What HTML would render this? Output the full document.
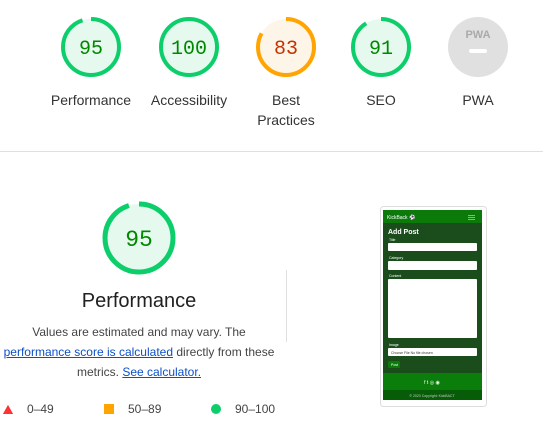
<!DOCTYPE html>
<html><head><meta charset="utf-8"><style>
body{margin:0;width:543px;height:441px;background:#fff;font-family:"Liberation Sans",Arial,sans-serif;position:relative;overflow:hidden;color:#212121}
.a{position:absolute}
.lbl{position:absolute;width:100px;text-align:center;font-size:14px;line-height:20px;color:#333}
.num{font-family:"Liberation Mono",monospace}
a{color:#0c50c7}
</style></head><body>
<svg class="a" style="left:0;top:0" width="543" height="441">
<g stroke-width="4" fill-opacity="1">
<circle cx="91" cy="47" r="28" fill="#e5f9ee" stroke="#0cce6b" stroke-dasharray="167 200" transform="rotate(-90 91 47)"/>
<circle cx="189" cy="47" r="28" fill="#e5f9ee" stroke="#0cce6b"/>
<circle cx="286" cy="47" r="28" fill="#fef5e9" stroke="#ffa400" stroke-dasharray="146 200" transform="rotate(-90 286 47)"/>
<circle cx="381" cy="47" r="28" fill="#e5f9ee" stroke="#0cce6b" stroke-dasharray="160 200" transform="rotate(-90 381 47)"/>
<circle cx="478" cy="47" r="30" fill="#e0e0e0" stroke="none"/>
<circle cx="139" cy="238" r="34" fill="#e5f9ee" stroke="#0cce6b" stroke-width="5" stroke-dasharray="203 300" transform="rotate(-90 139 238)"/>
</g>
<g font-family="Liberation Mono,monospace" font-size="20" text-anchor="middle">
<text x="91" y="54" fill="#008800">95</text>
<text x="189" y="54" fill="#008800">100</text>
<text x="286" y="54" fill="#c33300">83</text>
<text x="381" y="54" fill="#008800">91</text>
<text x="139" y="246" font-size="23" fill="#008800">95</text>
</g>
<text x="478" y="38" text-anchor="middle" font-size="11" font-weight="bold" fill="#aaa" font-family="Liberation Sans">PWA</text>
<rect x="469" y="49" width="18" height="4" rx="2" fill="#fff"/>
<line x1="0" y1="151.5" x2="543" y2="151.5" stroke="#e0e0e0"/>
<line x1="286.5" y1="270" x2="286.5" y2="342" stroke="#e0e0e0"/>
<polygon points="8,414 3,414 8,405 13,414" fill="#ff3333"/>
<polygon points="3,414 8,405 13,414" fill="#ff3333"/>
<rect x="104" y="404" width="10" height="10" fill="#ffa400"/>
<circle cx="216" cy="409" r="5" fill="#0cce6b"/>
<g font-size="12" fill="#444" font-family="Liberation Sans"><text x="27" y="413">0–49</text><text x="128" y="413">50–89</text><text x="235" y="413">90–100</text></g>
<!-- screenshot -->
<rect x="380.5" y="206.5" width="106" height="200" rx="3" fill="#fff" stroke="#ddd"/>
<rect x="383" y="210" width="99" height="190" fill="#1b4d1c"/>
<rect x="383" y="210" width="99" height="13" fill="#0b7a0b"/>
<text x="387" y="219" font-size="5" fill="#fff">KickBack ⚽</text>
<rect x="468" y="215" width="7" height="1" fill="#6c6"/><rect x="468" y="217" width="7" height="1" fill="#6c6"/><rect x="468" y="219" width="7" height="1" fill="#6c6"/>
<text x="388" y="234" font-size="7" font-weight="bold" fill="#fff">Add Post</text>
<text x="389" y="241" font-size="3.5" fill="#fff">Title</text>
<rect x="388" y="243" width="89" height="8" rx="1" fill="#fff"/>
<text x="389" y="259" font-size="3.5" fill="#fff">Category</text>
<rect x="388" y="261" width="89" height="9" rx="1" fill="#fff"/>
<text x="389" y="277" font-size="3.5" fill="#fff">Content</text>
<rect x="388" y="279" width="89" height="59" rx="1" fill="#fff"/>
<text x="389" y="346" font-size="3.5" fill="#fff">Image</text>
<rect x="388" y="348" width="89" height="8" rx="1" fill="#fff"/>
<text x="391" y="354" font-size="3.5" fill="#333">Choose File   No file chosen</text>
<rect x="388" y="361" width="12" height="7" rx="1" fill="#0b7a0b"/>
<text x="391" y="366" font-size="3.5" fill="#fff">Post</text>
<rect x="383" y="373" width="99" height="17" fill="#0a7d0a"/>
<text x="432" y="384" font-size="5" fill="#fff" text-anchor="middle">f     t     ◎     ◉</text>
<rect x="383" y="390" width="99" height="10" fill="#075c07"/>
<text x="432" y="397" font-size="3.5" fill="#ccc" text-anchor="middle">© 2023 Copyright: KickBACT</text>
</svg>
<div class="lbl" style="left:41px;top:90px">Performance</div>
<div class="lbl" style="left:139px;top:90px">Accessibility</div>
<div class="lbl" style="left:236px;top:90px">Best<br>Practices</div>
<div class="lbl" style="left:331px;top:90px">SEO</div>
<div class="lbl" style="left:428px;top:90px">PWA</div>
<div class="a" style="left:0;width:278px;top:288px;text-align:center;font-size:20px;line-height:26px;color:#212121">Performance</div>
<div class="a" style="left:0;width:278px;top:322px;text-align:center;font-size:12px;line-height:20px;color:#444">Values are estimated and may vary. The<br><a href="#">performance score is calculated</a> directly from these<br>metrics. <a href="#">See calculator.</a></div>
</body></html>
